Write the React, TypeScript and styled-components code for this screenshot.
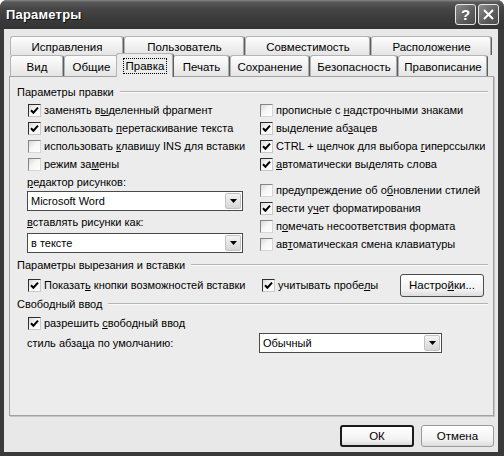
import React from "react";
import styled, { createGlobalStyle } from "styled-components";

const GlobalStyle = createGlobalStyle`
  html, body {
    margin: 0;
    padding: 0;
    background: #ffffff;
  }
  body {
    font-family: "Liberation Sans", Arial, sans-serif;
    font-size: 11px;
    color: #000;
  }
`;

type Option = { label: string; checked: boolean };

const editLeft: Option[] = [
  { label: "заменять в&ыделенный фрагмент", checked: true },
  { label: "использовать &перетаскивание текста", checked: true },
  { label: "использовать &клавишу INS для вставки", checked: false },
  { label: "режим за&мены", checked: false },
];

const editRightTop: Option[] = [
  { label: "прописные с &надстрочными знаками", checked: false },
  { label: "выделение аб&зацев", checked: true },
  { label: "CTRL + щелчок для выбора &гиперссылки", checked: true },
  { label: "&автоматически выделять слова", checked: true },
];

const editRightBottom: Option[] = [
  { label: "предупреждение об о&бновлении стилей", checked: false },
  { label: "вести у&чет форматирования", checked: true },
  { label: "п&омечать несоответствия формата", checked: false },
  { label: "ав&томатическая смена клавиатуры", checked: false },
];

const topTabs = [
  { label: "Исправления", w: 114 },
  { label: "Пользователь", w: 121 },
  { label: "Совместимость", w: 126 },
  { label: "Расположение", w: 121 },
];

const bottomTabs = [
  { label: "Вид", w: 54 },
  { label: "Общие", w: 55 },
  { label: "Правка", w: 58, active: true },
  { label: "Печать", w: 57 },
  { label: "Сохранение", w: 80 },
  { label: "Безопасность", w: 88 },
  { label: "Правописание", w: 90 },
];

// "&" marks the access key letter, drawn underlined
const Key = styled.span`
  text-decoration: underline;
  text-underline-offset: 1px;
`;

function Mnemonic({ text }: { text: string }) {
  const i = text.indexOf("&");
  if (i < 0) return <>{text}</>;
  return (
    <>
      {text.slice(0, i)}
      <Key>{text[i + 1]}</Key>
      {text.slice(i + 2)}
    </>
  );
}

const Window = styled.div`
  width: 504px;
  height: 456px;
  display: flex;
  flex-direction: column;
  background: #3a3a3a;
  border-radius: 7px 7px 0 0;
  overflow: hidden;
`;

const TitleBar = styled.div`
  height: 29px;
  flex: none;
  display: flex;
  align-items: center;
  padding: 0 5px 0 6px;
  background: linear-gradient(#8a8a8a 0, #5a5a5a 2px, #474747 8px, #3c3c3c 60%, #333 100%);
`;

const Title = styled.div`
  flex: 1;
  color: #fff;
  font-weight: bold;
  font-size: 13px;
  letter-spacing: 0.2px;
  text-shadow: 1px 1px 0 #111;
`;

const CaptionButton = styled.div`
  width: 21px;
  height: 21px;
  box-sizing: border-box;
  margin-left: 2px;
  border: 1px solid #e6e6e6;
  border-radius: 3px;
  background: linear-gradient(135deg, #8c8c8c, #5c5c5c 60%, #4a4a4a);
  display: flex;
  align-items: center;
  justify-content: center;
  color: #fff;
  font-weight: bold;
  font-size: 15px;
`;

const Body = styled.div`
  flex: 1;
  display: flex;
  flex-direction: column;
  margin: 0 6px 4px 4px;
  padding: 7px 4px 5px 5px;
  background: #e8e8e8;
`;

const TabRow = styled.div<{ $h: number }>`
  display: flex;
  height: ${(p) => p.$h}px;
  margin-left: 1px;
  align-items: flex-end;
  font-size: 11.5px;
`;

const Tab = styled.div<{ $w: number; $active?: boolean }>`
  position: relative;
  width: ${(p) => p.$w}px;
  height: ${(p) => (p.$active ? "calc(100% + 3px)" : "100%")};
  box-sizing: border-box;
  display: flex;
  align-items: center;
  justify-content: center;
  border: 1px solid #b4b4b4;
  border-bottom: none;
  border-right-color: #5e5e5e;
  border-radius: 3px 3px 0 0;
  box-shadow: inset -1px 0 0 #a8a8a8;
  background: ${(p) => (p.$active ? "#ececec" : "linear-gradient(#fdfdfd, #efefef 60%, #e4e4e4)")};
  margin: ${(p) => (p.$active ? "0 -1px -1px -3px" : "0")};
  z-index: ${(p) => (p.$active ? 2 : 1)};
  padding-top: ${(p) => (p.$active ? "0" : "1px")};
`;

const FocusText = styled.span`
  outline: 1px dotted #000;
  outline-offset: 1px;
  padding: 0 1px;
`;

const Panel = styled.div`
  flex: 1;
  position: relative;
  z-index: 1;
  display: flex;
  flex-direction: column;
  border: 1px solid #a2a2a2;
  box-shadow: 1px 1px 0 #c4c4c4;
  background: #ececec;
  padding: 8px 5px 0 7px;
`;

const GroupHeader = styled.div<{ $gap?: number }>`
  display: flex;
  align-items: center;
  gap: 6px;
  height: 14px;
  margin-top: ${(p) => p.$gap ?? 0}px;
`;

const Rule = styled.div`
  flex: 1;
  border-top: 1px solid #b4b4b4;
  border-bottom: 1px solid #fafafa;
`;

const Columns = styled.div<{ $gap?: number }>`
  display: grid;
  grid-template-columns: 232px 1fr;
  margin: ${(p) => p.$gap ?? 0}px 0 0 11px;
`;

const Column = styled.div`
  display: flex;
  flex-direction: column;
`;

const Block = styled.div<{ $gap?: number }>`
  display: flex;
  flex-direction: column;
  margin-top: ${(p) => p.$gap ?? 0}px;
`;

const CheckRow = styled.label<{ $h?: number; $shift?: number }>`
  display: flex;
  align-items: center;
  gap: 3px;
  height: ${(p) => p.$h ?? 18}px;
  margin-left: ${(p) => p.$shift ?? 0}px;
  white-space: nowrap;
`;

const Box = styled.span<{ $checked: boolean }>`
  width: 13px;
  height: 13px;
  flex: none;
  box-sizing: border-box;
  border: 1px solid;
  border-color: ${(p) =>
    p.$checked ? "#2e2e2e #c8c8c8 #c8c8c8 #2e2e2e" : "#858585 #d6d6d6 #d6d6d6 #858585"};
  background: linear-gradient(135deg, #d8d8d8, #f6f6f6 45%, #ffffff);
  display: flex;
  align-items: center;
  justify-content: center;
`;

const FieldLabel = styled.div<{ $h?: number }>`
  height: ${(p) => p.$h ?? 18}px;
  display: flex;
  align-items: center;
  margin-left: -1px;
  white-space: nowrap;
`;

const Select = styled.div<{ $w: number }>`
  width: ${(p) => p.$w}px;
  height: 20px;
  box-sizing: border-box;
  display: flex;
  align-items: center;
  border: 1px solid #4a4a4a;
  background: #fff;
  padding: 0 1px 0 3px;
  margin-left: -1px;
`;

const SelectValue = styled.span`
  flex: 1;
  white-space: nowrap;
`;

const Arrow = styled.span`
  width: 16px;
  height: 16px;
  box-sizing: border-box;
  border: 1px solid #c2c2c2;
  border-radius: 2px;
  background: linear-gradient(#f4f4f4, #d6d6d6);
  display: flex;
  align-items: center;
  justify-content: center;
`;

const InlineRow = styled.div`
  display: flex;
  align-items: center;
  height: 24px;
`;

const PushButton = styled.div<{ $w: number; $default?: boolean }>`
  width: ${(p) => p.$w}px;
  height: 23px;
  box-sizing: border-box;
  display: flex;
  align-items: center;
  justify-content: center;
  border: ${(p) => (p.$default ? "2px solid #1c1c1c" : "1px solid #4c4c4c")};
  border-radius: 3px;
  background: linear-gradient(#ffffff, #f2f2f2 70%, #dcdcdc);
  white-space: nowrap;
  font-size: 11.5px;
`;

const SideButton = styled(PushButton)`
  margin-left: auto;
  margin-right: 4px;
`;

const Footer = styled.div`
  display: flex;
  justify-content: flex-end;
  gap: 7px;
  padding-top: 9px;
`;

const DialogButton = styled(PushButton)<{ $soft?: boolean }>`
  height: 22px;
  border-color: ${(p) => (p.$soft ? "#9a9a9a" : p.$default ? "#1c1c1c" : "#4c4c4c")};
`;

function CheckMark() {
  return (
    <svg width="9" height="9" viewBox="0 0 9 9">
      <path d="M1 4.2 L3.4 6.7 L8 1.6" fill="none" stroke="#000" strokeWidth="2" />
    </svg>
  );
}

function Check({ opt, shift }: { opt: Option; shift?: number }) {
  return (
    <CheckRow $shift={shift}>
      <Box $checked={opt.checked}>{opt.checked && <CheckMark />}</Box>
      <span>
        <Mnemonic text={opt.label} />
      </span>
    </CheckRow>
  );
}

function Combo({ value, width }: { value: string; width: number }) {
  return (
    <Select $w={width}>
      <SelectValue>{value}</SelectValue>
      <Arrow>
        <svg width="7" height="4" viewBox="0 0 7 4">
          <path d="M0 0 H7 L3.5 4 Z" fill="#000" />
        </svg>
      </Arrow>
    </Select>
  );
}

export default function App() {
  return (
    <>
      <GlobalStyle />
      <Window>
        <TitleBar>
          <Title>Параметры</Title>
          <CaptionButton>?</CaptionButton>
          <CaptionButton>
            <svg width="11" height="11" viewBox="0 0 11 11">
              <path d="M1 1 L10 10 M10 1 L1 10" stroke="#fff" strokeWidth="2" />
            </svg>
          </CaptionButton>
        </TitleBar>
        <Body>
          <TabRow $h={19}>
            {topTabs.map((t) => (
              <Tab key={t.label} $w={t.w}>
                {t.label}
              </Tab>
            ))}
          </TabRow>
          <TabRow $h={21}>
            {bottomTabs.map((t) => (
              <Tab key={t.label} $w={t.w} $active={t.active}>
                {t.active ? <FocusText>{t.label}</FocusText> : t.label}
              </Tab>
            ))}
          </TabRow>
          <Panel>
            <GroupHeader>
              <span>Параметры правки</span>
              <Rule />
            </GroupHeader>
            <Columns $gap={2}>
              <Column>
                {editLeft.map((o) => (
                  <Check key={o.label} opt={o} />
                ))}
                <FieldLabel $h={18}>
                  <Mnemonic text="&редактор рисунков:" />
                </FieldLabel>
                <Combo value="Microsoft Word" width={216} />
                <FieldLabel $h={22}>
                  <Mnemonic text="&вставлять рисунки как:" />
                </FieldLabel>
                <Combo value="в тексте" width={216} />
              </Column>
              <Column>
                <Block>
                  {editRightTop.map((o) => (
                    <Check key={o.label} opt={o} />
                  ))}
                </Block>
                <Block $gap={8}>
                  {editRightBottom.map((o) => (
                    <Check key={o.label} opt={o} />
                  ))}
                </Block>
              </Column>
            </Columns>

            <GroupHeader $gap={5}>
              <span>Параметры вырезания и вставки</span>
              <Rule />
            </GroupHeader>
            <Columns $gap={1}>
              <InlineRow>
                <Check opt={{ label: "Показат&ь кнопки возможностей вставки", checked: true }} />
              </InlineRow>
              <InlineRow>
                <Check opt={{ label: "учитывать пробе&лы", checked: true }} shift={2} />
                <SideButton $w={84}>
                  <Mnemonic text="Настро&йки..." />
                </SideButton>
              </InlineRow>
            </Columns>

            <GroupHeader>
              <span>Свободный ввод</span>
              <Rule />
            </GroupHeader>
            <Columns $gap={3}>
              <Check opt={{ label: "разрешить &свободный ввод", checked: true }} />
            </Columns>
            <Columns $gap={1}>
              <FieldLabel $h={20}>
                <Mnemonic text="стиль абза&ца по умолчанию:" />
              </FieldLabel>
              <Combo value="Обычный" width={183} />
            </Columns>
          </Panel>
          <Footer>
            <DialogButton $w={74} $default>
              ОК
            </DialogButton>
            <DialogButton $w={73} $soft>
              Отмена
            </DialogButton>
          </Footer>
        </Body>
      </Window>
    </>
  );
}
